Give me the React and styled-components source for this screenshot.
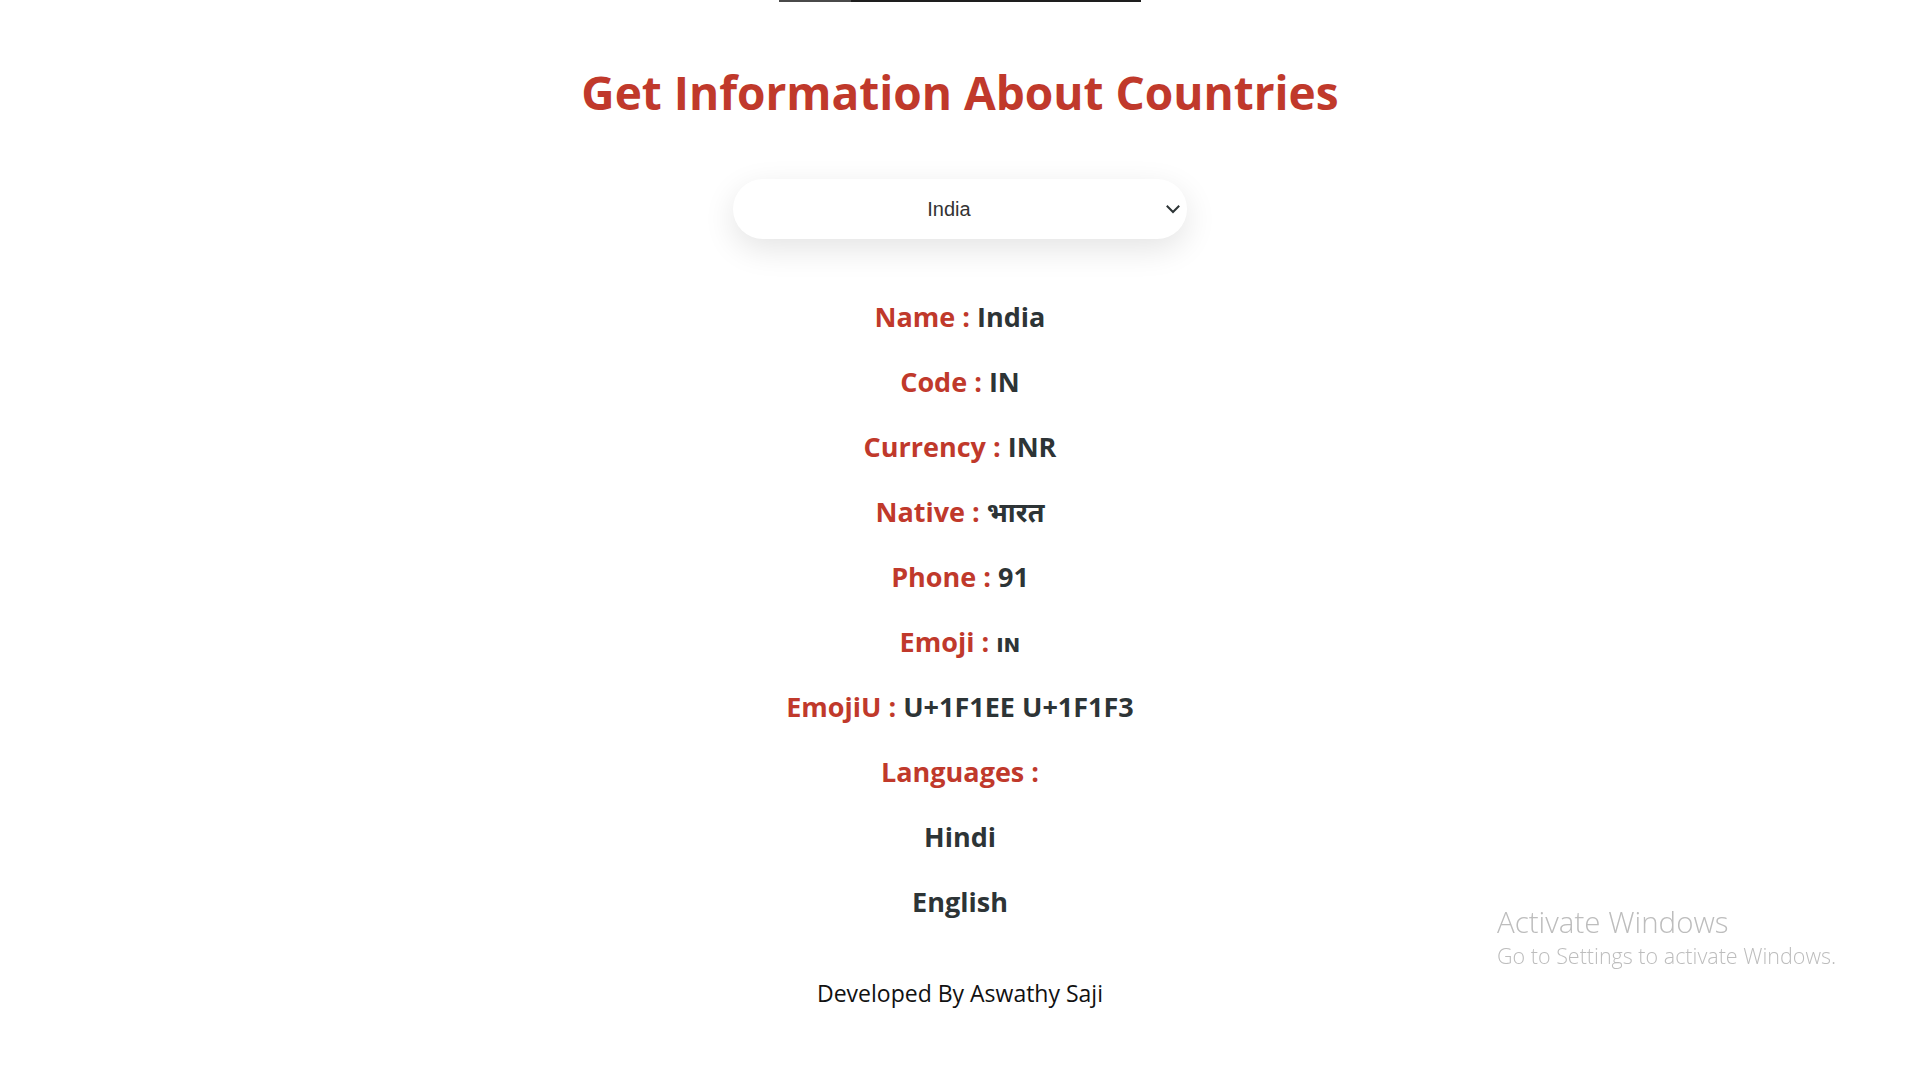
import React, { useState } from 'react';
import styled, { createGlobalStyle } from 'styled-components';

const accent = '#c0392b';
const ink = '#2d3436';
const uiFont = '"Open Sans", "Noto Sans", "Noto Sans Devanagari", sans-serif';

const GlobalStyle = createGlobalStyle`
    html, body {
        margin: 0;
        padding: 0;
        background: #ffffff;
    }
    body {
        font-family: ${uiFont};
    }
`;

const Page = styled.div`
    min-height: 1080px;
    display: flex;
    flex-direction: column;
    align-items: center;
`;

const TopBar = styled.div`
    width: 362px;
    height: 2px;
    display: flex;
`;

const BarPiece = styled.div`
    height: 100%;
    width: ${(p) => p.width || 'auto'};
    flex: ${(p) => (p.width ? 'none' : 1)};
    background: ${(p) => p.color};
`;

const Title = styled.h1`
    margin: 61px 0 0;
    font-size: 46px;
    line-height: 58px;
    font-weight: 700;
    color: ${accent};
    text-align: center;
`;

const SelectWrap = styled.div`
    position: relative;
    margin-top: 58px;
    width: 454px;
    height: 60px;
    border-radius: 30px;
    background: #ffffff;
    box-shadow: 0 10px 32px rgba(0, 0, 0, 0.11);
`;

const CountrySelect = styled.select`
    appearance: none;
    width: 100%;
    height: 100%;
    border: none;
    outline: none;
    background: transparent;
    border-radius: 30px;
    padding: 0 22px 0 0;
    font-family: "Liberation Sans", Arial, sans-serif;
    font-size: 20px;
    color: #333333;
    text-align: center;
    text-align-last: center;
    cursor: pointer;
`;

const Chevron = styled.svg`
    position: absolute;
    right: 6px;
    top: 22px;
    width: 16px;
    height: 16px;
    pointer-events: none;
`;

const InfoList = styled.div`
    margin-top: 45px;
    display: flex;
    flex-direction: column;
    align-items: center;
`;

const Row = styled.div`
    height: 65px;
    line-height: 65px;
    font-size: 27px;
    font-weight: 700;
    color: ${ink};
    white-space: nowrap;
`;

const Label = styled.span`
    color: ${accent};
`;

const EmojiText = styled.span`
    font-size: 20px;
    font-family: "DejaVu Sans", sans-serif;
`;

const Footer = styled.footer`
    margin-top: 44px;
    font-size: 23px;
    line-height: 30px;
    color: #111111;
`;

const Watermark = styled.div`
    position: fixed;
    left: 1497px;
    top: 903px;
    color: #bdbdbd;
    font-family: "Open Sans", sans-serif;
`;

const WatermarkTitle = styled.div`
    font-size: 29.5px;
    font-weight: 300;
    line-height: 38px;
`;

const WatermarkText = styled.div`
    font-size: 21.5px;
    font-weight: 300;
    line-height: 30px;
`;

const country = {
    name: 'India',
    code: 'IN',
    currency: 'INR',
    native: 'भारत',
    phone: '91',
    emojiU: 'U+1F1EE U+1F1F3',
    languages: ['Hindi', 'English'],
};

const App = () => {
    const [selected, setSelected] = useState('IN');

    return (
        <Page>
            <GlobalStyle />
            <TopBar>
                <BarPiece width="72px" color="#4a4a4a" />
                <BarPiece color="#1e1e1e" />
            </TopBar>
            <Title>Get Information About Countries</Title>
            <SelectWrap>
                <CountrySelect value={selected} onChange={(e) => setSelected(e.target.value)}>
                    <option value="IN">India</option>
                    <option value="US">United States</option>
                    <option value="FR">France</option>
                </CountrySelect>
                <Chevron viewBox="0 0 16 16" fill="none">
                    <path d="M2.5 5.5l5.5 5.5 5.5-5.5" stroke="#2d3436" strokeWidth="2" strokeLinecap="square" />
                </Chevron>
            </SelectWrap>
            <InfoList>
                <Row><Label>Name : </Label>{country.name}</Row>
                <Row><Label>Code : </Label>{country.code}</Row>
                <Row><Label>Currency : </Label>{country.currency}</Row>
                <Row><Label>Native : </Label>{country.native}</Row>
                <Row><Label>Phone : </Label>{country.phone}</Row>
                <Row><Label>Emoji : </Label><EmojiText>IN</EmojiText></Row>
                <Row><Label>EmojiU : </Label>{country.emojiU}</Row>
                <Row><Label>Languages : </Label></Row>
                {country.languages.map((lang) => (
                    <Row key={lang}>{lang}</Row>
                ))}
            </InfoList>
            <Footer>Developed By Aswathy Saji</Footer>
            <Watermark>
                <WatermarkTitle>Activate Windows</WatermarkTitle>
                <WatermarkText>Go to Settings to activate Windows.</WatermarkText>
            </Watermark>
        </Page>
    );
};

export default App;
